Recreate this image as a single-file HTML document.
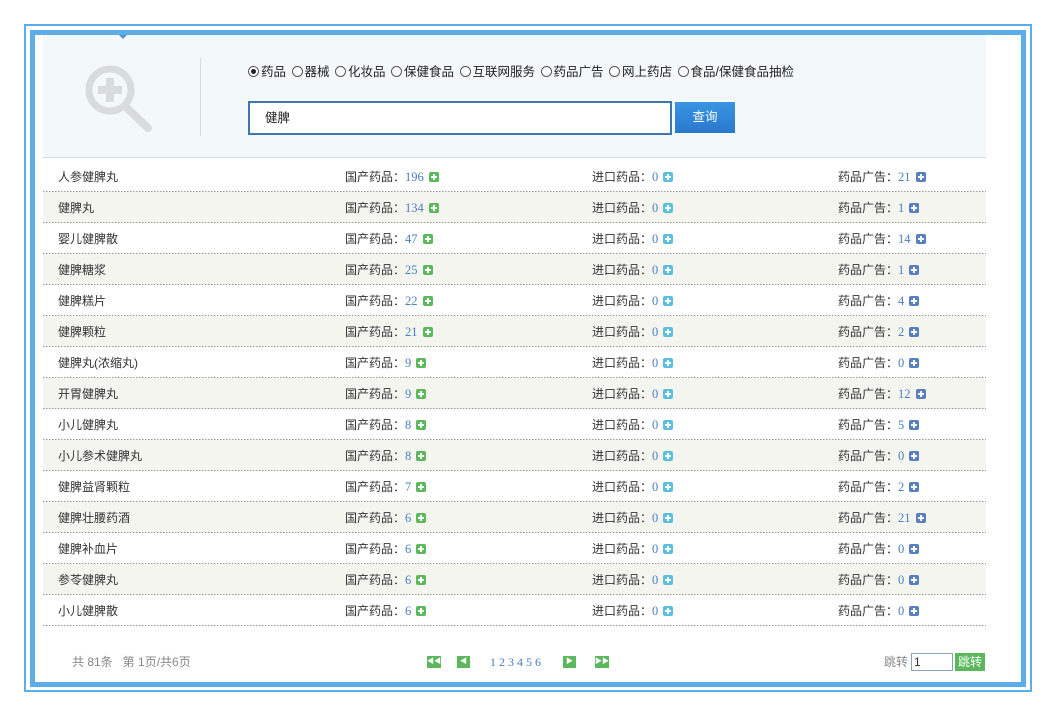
<!DOCTYPE html>
<html><head><meta charset="utf-8"><style>
*{margin:0;padding:0;box-sizing:border-box}
body{width:1056px;height:717px;background:#fff;font-family:"Liberation Sans","Noto Sans CJK SC",sans-serif;font-size:12px;color:#333;position:relative;overflow:hidden}
.outer{position:absolute;left:24px;top:24px;width:1008px;height:668px;border:2px solid #5dade6}
.inner{position:absolute;left:30px;top:30px;width:996px;height:657px;border:5px solid #5dade6}
.head{position:absolute;left:43px;top:35px;width:943px;height:123px;background:#f3f8fb;border-bottom:1px solid #cfdde6}
.tri{position:absolute;left:119px;top:35px;width:0;height:0;border-left:4px solid transparent;border-right:4px solid transparent;border-top:4px solid #5a8fc9}
.vline{position:absolute;left:200px;top:58px;width:1px;height:78px;background:#d5dbe0}
.radios{position:absolute;left:248px;top:61px;font-size:12.5px;color:#222;white-space:nowrap}
.radios span{margin-right:2px}
.r{display:inline-block;width:11px;height:11px;border:1px solid #555;border-radius:50%;vertical-align:-1px;margin-right:2px;position:relative;background:#fff}
.r.on::after{content:"";position:absolute;left:2px;top:2px;width:5px;height:5px;border-radius:50%;background:#222}
.inp{position:absolute;left:248px;top:101px;width:424px;height:34px;border:2px solid #3f77ad;background:#fff;padding-left:15px;line-height:30px;font-size:12.5px;color:#222}
.btn{position:absolute;left:675px;top:102px;width:60px;height:31px;background:linear-gradient(#3a95e3,#2a78cc);color:#fff;text-align:center;line-height:31px;font-size:12.5px}
.rows{position:absolute;left:43px;top:161px;width:943px}
.row{height:31px;position:relative;line-height:32px;background-image:linear-gradient(to right,#999 50%,transparent 50%);background-size:3px 1px;background-repeat:repeat-x;background-position:bottom left}
.row:nth-child(even){background-color:#f5f5f0}
.row div{position:absolute;top:0}
.c1{left:15px}.c2{left:302px}.c3{left:549px}.c4{left:795px}
.n{color:#4a7fc0;font-family:"Liberation Serif",serif;font-size:12.5px;margin:0 5px 0 0}
.p{display:inline-block;width:10px;height:10px;border-radius:2px;vertical-align:-1px;position:relative}
.p::before{content:"";position:absolute;left:2px;top:4px;width:6px;height:2px;background:#fff}
.p::after{content:"";position:absolute;left:4px;top:2px;width:2px;height:6px;background:#fff}
.g{background:#5cb85c}.t{background:#5bc0de}.b{background:#5a7fc0}
.foot{position:absolute;top:655px;font-size:12px;color:#888;line-height:14px}
.pg{display:inline-block;width:14px;height:12px;background:#5cb85c;position:absolute;top:656px;color:#fff;font-size:7px;text-align:center;line-height:12px}
</style></head><body>
<div class="outer"></div>
<div class="inner"></div>
<div class="head"></div>
<div class="tri"></div>
<svg style="position:absolute;left:82px;top:62px" width="74" height="72" viewBox="0 0 74 72"><circle cx="28" cy="28" r="21" fill="none" stroke="#d9dcdf" stroke-width="7"/><line x1="44" y1="45" x2="66" y2="66" stroke="#d9dcdf" stroke-width="8" stroke-linecap="round"/><rect x="24" y="16" width="8" height="24" fill="#d9dcdf"/><rect x="16" y="24" width="24" height="8" fill="#d9dcdf"/></svg>
<div class="vline"></div>
<div class="radios"><i class="r on"></i><span>药品</span> <i class="r"></i><span>器械</span> <i class="r"></i><span>化妆品</span> <i class="r"></i><span>保健食品</span> <i class="r"></i><span>互联网服务</span> <i class="r"></i><span>药品广告</span> <i class="r"></i><span>网上药店</span> <i class="r"></i><span>食品/保健食品抽检</span></div>
<div class="inp">健脾</div>
<div class="btn">查询</div>
<div class="rows">
<div class="row"><div class="c1">人参健脾丸</div><div class="c2">国产药品：<span class="n">196</span><i class="p g"></i></div><div class="c3">进口药品：<span class="n">0</span><i class="p t"></i></div><div class="c4">药品广告：<span class="n">21</span><i class="p b"></i></div></div>
<div class="row"><div class="c1">健脾丸</div><div class="c2">国产药品：<span class="n">134</span><i class="p g"></i></div><div class="c3">进口药品：<span class="n">0</span><i class="p t"></i></div><div class="c4">药品广告：<span class="n">1</span><i class="p b"></i></div></div>
<div class="row"><div class="c1">婴儿健脾散</div><div class="c2">国产药品：<span class="n">47</span><i class="p g"></i></div><div class="c3">进口药品：<span class="n">0</span><i class="p t"></i></div><div class="c4">药品广告：<span class="n">14</span><i class="p b"></i></div></div>
<div class="row"><div class="c1">健脾糖浆</div><div class="c2">国产药品：<span class="n">25</span><i class="p g"></i></div><div class="c3">进口药品：<span class="n">0</span><i class="p t"></i></div><div class="c4">药品广告：<span class="n">1</span><i class="p b"></i></div></div>
<div class="row"><div class="c1">健脾糕片</div><div class="c2">国产药品：<span class="n">22</span><i class="p g"></i></div><div class="c3">进口药品：<span class="n">0</span><i class="p t"></i></div><div class="c4">药品广告：<span class="n">4</span><i class="p b"></i></div></div>
<div class="row"><div class="c1">健脾颗粒</div><div class="c2">国产药品：<span class="n">21</span><i class="p g"></i></div><div class="c3">进口药品：<span class="n">0</span><i class="p t"></i></div><div class="c4">药品广告：<span class="n">2</span><i class="p b"></i></div></div>
<div class="row"><div class="c1">健脾丸(浓缩丸)</div><div class="c2">国产药品：<span class="n">9</span><i class="p g"></i></div><div class="c3">进口药品：<span class="n">0</span><i class="p t"></i></div><div class="c4">药品广告：<span class="n">0</span><i class="p b"></i></div></div>
<div class="row"><div class="c1">开胃健脾丸</div><div class="c2">国产药品：<span class="n">9</span><i class="p g"></i></div><div class="c3">进口药品：<span class="n">0</span><i class="p t"></i></div><div class="c4">药品广告：<span class="n">12</span><i class="p b"></i></div></div>
<div class="row"><div class="c1">小儿健脾丸</div><div class="c2">国产药品：<span class="n">8</span><i class="p g"></i></div><div class="c3">进口药品：<span class="n">0</span><i class="p t"></i></div><div class="c4">药品广告：<span class="n">5</span><i class="p b"></i></div></div>
<div class="row"><div class="c1">小儿参术健脾丸</div><div class="c2">国产药品：<span class="n">8</span><i class="p g"></i></div><div class="c3">进口药品：<span class="n">0</span><i class="p t"></i></div><div class="c4">药品广告：<span class="n">0</span><i class="p b"></i></div></div>
<div class="row"><div class="c1">健脾益肾颗粒</div><div class="c2">国产药品：<span class="n">7</span><i class="p g"></i></div><div class="c3">进口药品：<span class="n">0</span><i class="p t"></i></div><div class="c4">药品广告：<span class="n">2</span><i class="p b"></i></div></div>
<div class="row"><div class="c1">健脾壮腰药酒</div><div class="c2">国产药品：<span class="n">6</span><i class="p g"></i></div><div class="c3">进口药品：<span class="n">0</span><i class="p t"></i></div><div class="c4">药品广告：<span class="n">21</span><i class="p b"></i></div></div>
<div class="row"><div class="c1">健脾补血片</div><div class="c2">国产药品：<span class="n">6</span><i class="p g"></i></div><div class="c3">进口药品：<span class="n">0</span><i class="p t"></i></div><div class="c4">药品广告：<span class="n">0</span><i class="p b"></i></div></div>
<div class="row"><div class="c1">参苓健脾丸</div><div class="c2">国产药品：<span class="n">6</span><i class="p g"></i></div><div class="c3">进口药品：<span class="n">0</span><i class="p t"></i></div><div class="c4">药品广告：<span class="n">0</span><i class="p b"></i></div></div>
<div class="row"><div class="c1">小儿健脾散</div><div class="c2">国产药品：<span class="n">6</span><i class="p g"></i></div><div class="c3">进口药品：<span class="n">0</span><i class="p t"></i></div><div class="c4">药品广告：<span class="n">0</span><i class="p b"></i></div></div>
</div>
<div class="foot" style="left:72px">共 81条&nbsp;&nbsp;&nbsp;第 1页/共6页</div>
<span class="pg" style="left:427px">◀◀</span>
<span class="pg" style="left:457px;width:13px">◀</span>
<div class="foot" style="left:490px;color:#4a7fc0;font-family:'Liberation Serif',serif">1 2 3 4 5 6</div>
<span class="pg" style="left:563px;width:13px">▶</span>
<span class="pg" style="left:595px">▶▶</span>
<div class="foot" style="left:884px">跳转</div>
<div style="position:absolute;left:911px;top:653px;width:42px;height:18px;border:1px solid #8aa3b8;background:#fff;font-size:12px;line-height:16px;padding-left:2px">1</div>
<div style="position:absolute;left:955px;top:653px;width:30px;height:18px;background:#5cb85c;color:#fff;font-size:12px;line-height:18px;text-align:center">跳转</div>
</body></html>
